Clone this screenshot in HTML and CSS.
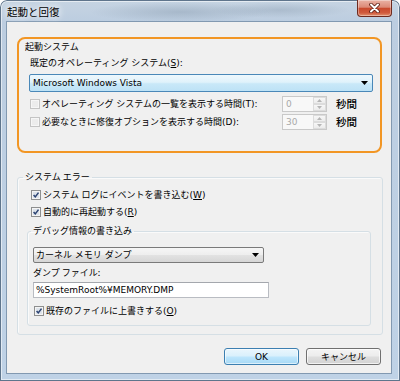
FILE: index.html
```html
<!DOCTYPE html>
<html lang="ja">
<head>
<meta charset="utf-8">
<title>起動と回復</title>
<link rel="stylesheet" href="styles.css">
</head>
<body>
<div class="window">
  <div class="titlebar">
    <span class="title">起動と回復</span>
    <div class="close">
      <svg width="13" height="10" viewBox="0 0 13 10"><path d="M3 1.5 L10 8.5 M10 1.5 L3 8.5" stroke="#5a1e14" stroke-width="3.6" stroke-linecap="round"/><path d="M3 1.5 L10 8.5 M10 1.5 L3 8.5" stroke="#fff" stroke-width="2" stroke-linecap="round"/></svg>
    </div>
  </div>
  <div class="client">
    <div class="focusbox">
      <div class="label">起動システム</div>
      <div class="label sub">既定のオペレーティング システム(<u>S</u>):</div>
      <div class="combo combo-hot">
        <span class="combo-text">Microsoft Windows Vista</span>
        <svg class="arrow" width="7" height="4" viewBox="0 0 7 4"><path d="M0 0 H7 L3.5 4 Z" fill="#000"/></svg>
      </div>
      <div class="row timer first">
        <svg class="cb" width="10" height="10" viewBox="0 0 10 10"><rect x=".5" y=".5" width="9" height="9" fill="#f6f6f6" stroke="#c4c4c4"/><rect x="2" y="2" width="6" height="6" fill="#ececec"/></svg>
        <span class="rowtext">オペレーティング システムの一覧を表示する時間(T):</span>
        <div class="spin"><span class="spin-val">0</span><div class="spin-btns"><span class="sb"><svg width="5" height="3" viewBox="0 0 5 3"><path d="M0 3 L2.5 0 L5 3 Z" fill="#b5b5b5"/></svg></span><span class="sb"><svg width="5" height="3" viewBox="0 0 5 3"><path d="M0 0 L2.5 3 L5 0 Z" fill="#b5b5b5"/></svg></span></div></div>
        <span class="unit">秒間</span>
      </div>
      <div class="row timer">
        <svg class="cb" width="10" height="10" viewBox="0 0 10 10"><rect x=".5" y=".5" width="9" height="9" fill="#f6f6f6" stroke="#c4c4c4"/><rect x="2" y="2" width="6" height="6" fill="#ececec"/></svg>
        <span class="rowtext">必要なときに修復オプションを表示する時間(D):</span>
        <div class="spin"><span class="spin-val">30</span><div class="spin-btns"><span class="sb"><svg width="5" height="3" viewBox="0 0 5 3"><path d="M0 3 L2.5 0 L5 3 Z" fill="#b5b5b5"/></svg></span><span class="sb"><svg width="5" height="3" viewBox="0 0 5 3"><path d="M0 0 L2.5 3 L5 0 Z" fill="#b5b5b5"/></svg></span></div></div>
        <span class="unit">秒間</span>
      </div>
    </div>

    <fieldset class="group outer">
      <legend>システム エラー</legend>
      <div class="group-body">
        <div class="row check first">
          <svg class="cb" width="10" height="10" viewBox="0 0 10 10"><rect x=".5" y=".5" width="9" height="9" fill="#f4f4f4" stroke="#8e8f8f"/><rect x="2" y="2" width="6" height="6" fill="#dde3ea"/><path d="M2.6 4.9 L4.3 6.9 L7.5 2.6" stroke="#2c4372" stroke-width="1.5" fill="none"/></svg>
          <span>システム ログにイベントを書き込む(<u>W</u>)</span>
        </div>
        <div class="row check">
          <svg class="cb" width="10" height="10" viewBox="0 0 10 10"><rect x=".5" y=".5" width="9" height="9" fill="#f4f4f4" stroke="#8e8f8f"/><rect x="2" y="2" width="6" height="6" fill="#dde3ea"/><path d="M2.6 4.9 L4.3 6.9 L7.5 2.6" stroke="#2c4372" stroke-width="1.5" fill="none"/></svg>
          <span>自動的に再起動する(<u>R</u>)</span>
        </div>
        <fieldset class="group inner">
          <legend>デバッグ情報の書き込み</legend>
          <div class="inner-body">
            <div class="combo combo-plain">
              <span class="combo-text">カーネル メモリ ダンプ</span>
              <svg class="arrow" width="7" height="4" viewBox="0 0 7 4"><path d="M0 0 H7 L3.5 4 Z" fill="#000"/></svg>
            </div>
            <div class="label dump">ダンプ ファイル:</div>
            <div class="textbox">%SystemRoot%¥MEMORY.DMP</div>
            <div class="row check last">
              <svg class="cb" width="10" height="10" viewBox="0 0 10 10"><rect x=".5" y=".5" width="9" height="9" fill="#f4f4f4" stroke="#8e8f8f"/><rect x="2" y="2" width="6" height="6" fill="#dde3ea"/><path d="M2.6 4.9 L4.3 6.9 L7.5 2.6" stroke="#2c4372" stroke-width="1.5" fill="none"/></svg>
              <span>既存のファイルに上書きする(<u>O</u>)</span>
            </div>
          </div>
        </fieldset>
      </div>
    </fieldset>

    <div class="buttons">
      <button class="btn btn-default">OK</button>
      <button class="btn">キャンセル</button>
    </div>
  </div>
</div>
</body>
</html>
```

FILE: styles.css
```css
html, body {
  margin: 0;
  padding: 0;
}

body {
  width: 400px;
  height: 381px;
  overflow: hidden;
  background: #ffffff;
  font-family: "DejaVu Sans", "Noto Sans CJK JP", sans-serif;
  font-size: 9px;
  line-height: 12px;
  color: #000;
}

.window {
  width: 400px;
  height: 381px;
  box-sizing: border-box;
  padding: 0 9px 8px 7px;
  border-radius: 7px 7px 0 0;
  background:
    radial-gradient(ellipse 90px 10px at 180px 12px, rgba(120,140,160,.35), transparent),
    radial-gradient(ellipse 70px 8px at 280px 10px, rgba(120,140,160,.3), transparent),
    linear-gradient(180deg, #c6d4e2 0, #bccde0 22px, #bfd2e6 100%);
  box-shadow: inset 0 0 0 1px #5f758c, inset 0 0 0 2px rgba(255,255,255,.55);
}

.titlebar {
  height: 22px;
  display: flex;
  align-items: flex-start;
}

.title {
  font-family: "Noto Sans CJK JP", sans-serif;
  font-size: 10.5px;
  line-height: 14px;
  padding-top: 5px;
  color: #000;
  text-shadow: 0 0 6px #fff, 0 0 10px rgba(255,255,255,.9);
}

.close {
  margin-left: auto;
  margin-right: -1px;
  width: 35px;
  height: 17px;
  box-sizing: border-box;
  border: 1px solid #6e2a1e;
  border-top: none;
  border-radius: 0 0 4px 4px;
  background: linear-gradient(180deg, #eab2a5 0, #dc8a77 45%, #c94a2e 52%, #d05a3c 80%, #e2926f 100%);
  box-shadow: inset 0 0 0 1px rgba(255,255,255,.35);
  display: flex;
  align-items: center;
  justify-content: center;
}

.client {
  height: 351px;
  box-sizing: border-box;
  background: #f0f0f0;
  box-shadow: 0 0 0 1px #8299b1;
  padding-top: 15px;
}

/* orange highlighted group */
.focusbox {
  margin-left: 10px;
  width: 365px;
  height: 116px;
  box-sizing: border-box;
  border: 2px solid #f29624;
  border-radius: 8px;
  padding: 2px 0 0 6px;
}

.label {
  line-height: 12px;
  font-family: "Noto Sans CJK JP", "DejaVu Sans", sans-serif;
}

.label.sub {
  margin-top: 4px;
  margin-left: 5px;
  font-family: "DejaVu Sans", "Noto Sans CJK JP", sans-serif;
}

.combo {
  display: flex;
  align-items: center;
  box-sizing: border-box;
  border-radius: 2px;
}

.combo-text {
  flex: 1;
  white-space: nowrap;
}

.combo .arrow {
  margin-right: 4px;
}

.combo-hot {
  margin-top: 5px;
  margin-left: 4px;
  width: 344px;
  height: 18px;
  padding-left: 3px;
  border: 1px solid #4a88b8;
  background: linear-gradient(180deg, #eef8fd 0, #e0f2fb 45%, #c9e8f8 55%, #bde2f6 100%);
}

.combo-plain {
  width: 231px;
  height: 16px;
  padding-left: 2px;
  border: 1px solid #7a7a7a;
  background: linear-gradient(180deg, #f6f6f6 0, #eeeeee 48%, #e2e2e2 52%, #d6d6d6 100%);
}

.row {
  display: flex;
  align-items: center;
  white-space: nowrap;
}

.cb {
  flex: none;
  margin-right: 2px;
}

.timer {
  height: 16px;
  margin-left: 5px;
  margin-top: 2px;
}

.timer.first {
  margin-top: 4px;
}

.rowtext {
  width: 240px;
}

.spin {
  width: 45px;
  height: 16px;
  box-sizing: border-box;
  border: 1px solid #c9c9c9;
  background: #f8f8f8;
  display: flex;
  align-items: center;
}

.spin-val {
  flex: 1;
  padding-left: 3px;
  color: #a9a9a9;
}

.spin-btns {
  width: 13px;
  height: 14px;
  display: flex;
  flex-direction: column;
}

.sb {
  flex: 1;
  display: flex;
  align-items: center;
  justify-content: center;
  box-sizing: border-box;
  border: 1px solid #dcdcdc;
  background: linear-gradient(#f7f7f7, #ececec);
}

.unit {
  margin-left: 9px;
  font-family: "Noto Sans CJK JP", sans-serif;
  font-size: 10.5px;
  font-weight: 500;
}

/* group boxes */
.group {
  margin: 0;
  padding: 0;
  min-width: 0;
  border: 1px solid #d5dfe5;
  border-radius: 3px;
  box-shadow: inset 1px 1px 0 #fafafa;
}

.group legend {
  padding: 0 2px;
  line-height: 12px;
  font-family: "Noto Sans CJK JP", "DejaVu Sans", sans-serif;
}

.group.outer {
  margin-top: 18px;
  margin-left: 10px;
  width: 366px;
  box-sizing: border-box;
}

.group.outer > legend {
  margin-left: 5px;
}

.group-body {
  padding: 5px 0 8px 9px;
}

.check {
  height: 14px;
  margin-top: 3px;
  margin-left: 4px;
}

.check.first {
  margin-top: 0;
}

.group.inner {
  margin-top: 6px;
  width: 344px;
  box-sizing: border-box;
}

.group.inner > legend {
  margin-left: 3px;
}

.inner-body {
  padding: 10px 0 7px 5px;
}

.label.dump {
  margin-top: 4px;
}

.textbox {
  margin-top: 3px;
  width: 236px;
  height: 16px;
  box-sizing: border-box;
  border: 1px solid #b9bcc2;
  border-top-color: #a4a7ad;
  background: #fff;
  padding-left: 2px;
  line-height: 14px;
  white-space: nowrap;
}

.check.last {
  margin-top: 6px;
  margin-left: 1px;
}

/* buttons */
.buttons {
  margin-top: 13px;
  padding-right: 10px;
  display: flex;
  justify-content: flex-end;
  gap: 7px;
}

.btn {
  width: 75px;
  height: 17px;
  box-sizing: border-box;
  margin: 0;
  padding: 0;
  border: 1px solid #707070;
  border-radius: 3px;
  font-family: "DejaVu Sans", "Noto Sans CJK JP", sans-serif;
  font-size: 9px;
  line-height: 14px;
  color: #000;
  background: linear-gradient(180deg, #f4f4f4 0, #ececec 48%, #dedede 52%, #d2d2d2 100%);
  box-shadow: inset 0 0 0 1px rgba(255,255,255,.7);
}

.btn-default {
  border-color: #3c7fb1;
  background: linear-gradient(180deg, #eaf6fd 0, #d9f0fc 48%, #bee6fd 52%, #a7d9f5 100%);
  box-shadow: inset 0 0 0 1px rgba(255,255,255,.6);
}
```
